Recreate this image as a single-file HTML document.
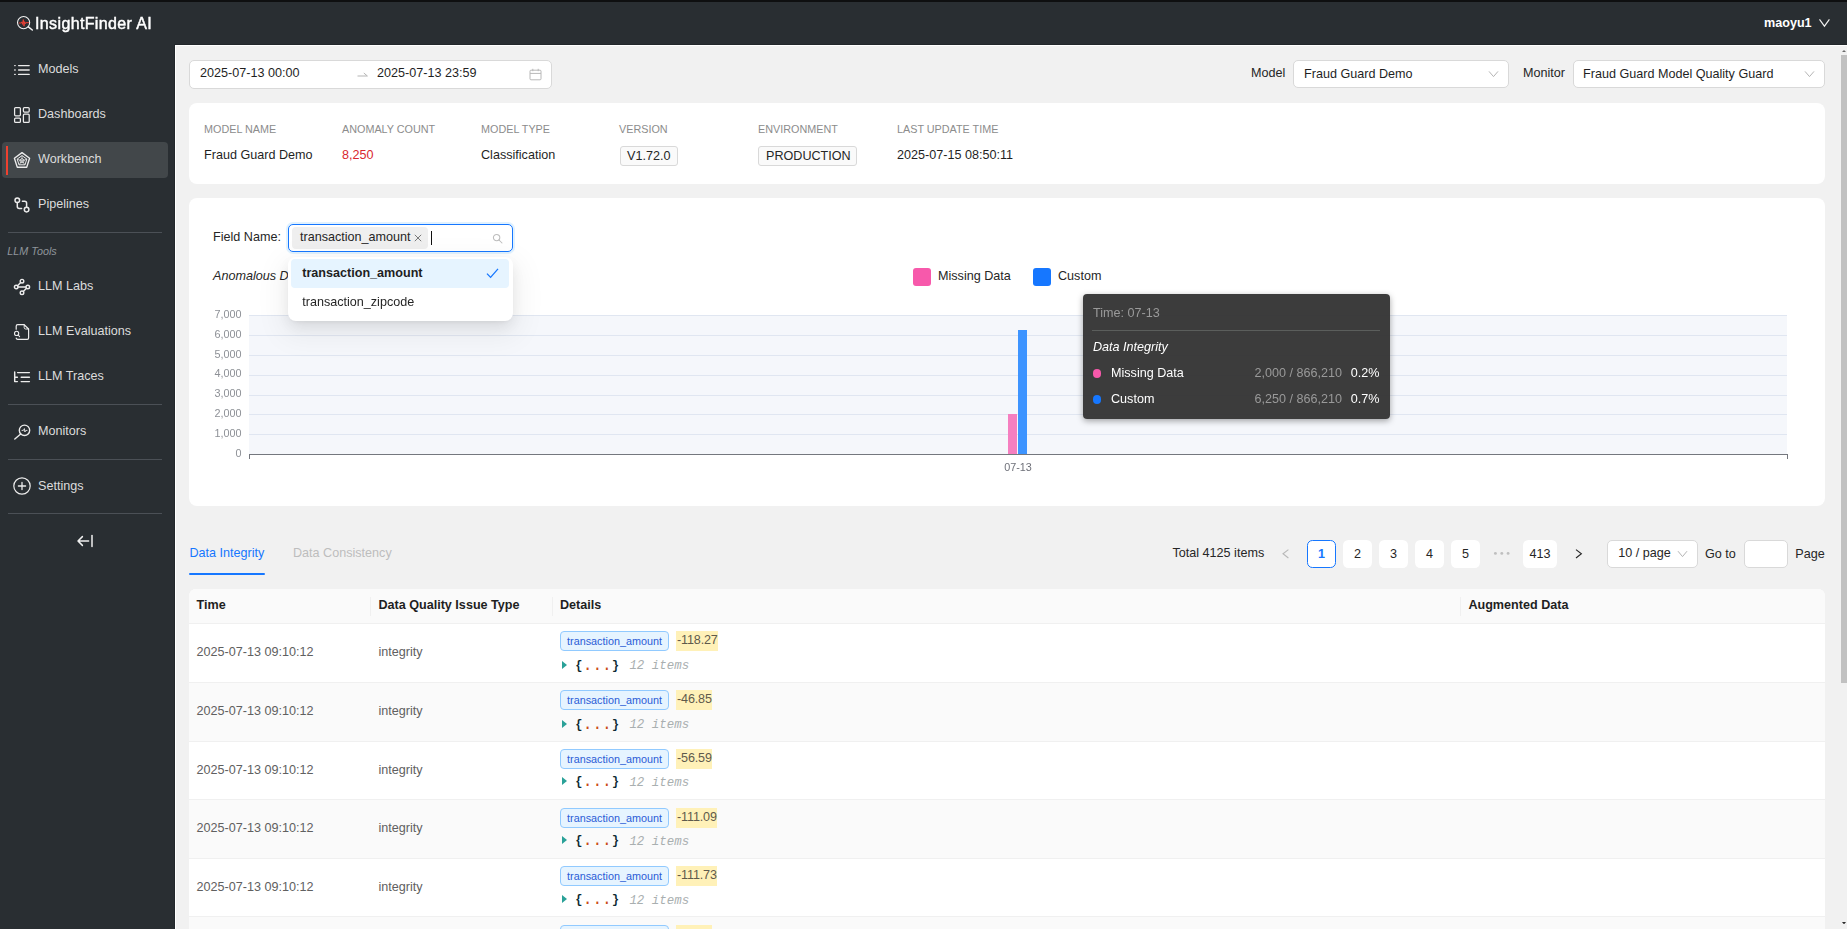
<!DOCTYPE html>
<html>
<head>
<meta charset="utf-8">
<title>InsightFinder AI</title>
<style>
*{box-sizing:border-box;margin:0;padding:0}
html,body{width:1847px;height:929px;overflow:hidden;background:#f1f1f1;font-family:"Liberation Sans",sans-serif;font-size:12.6px;color:#262626}
.abs{position:absolute}
#topline{position:absolute;left:0;top:0;width:1847px;height:1.5px;background:#0e0f10;z-index:50}
#header{position:absolute;left:0;top:0;width:1847px;height:45px;background:#292e32}
#sidebar{position:absolute;left:0;top:45px;width:175px;height:884px;background:#292e32}
#content{position:absolute;left:175px;top:45px;width:1666px;height:884px;background:#f1f1f1;overflow:hidden}
#edge-t{position:absolute;left:175px;top:45px;width:1672px;height:1px;background:#fff;z-index:5}
#edge-l{position:absolute;left:175px;top:45px;width:1px;height:884px;background:#fff;z-index:5}
#sh-t{position:absolute;left:175px;top:44px;width:1672px;height:1px;background:#22272b;z-index:5}
#sh-l{position:absolute;left:174px;top:44px;width:1px;height:885px;background:#22272b;z-index:5}
#scroll{position:absolute;left:1841px;top:46px;width:6px;height:883px;background:#f1f1f1}
#scroll .thumb{position:absolute;left:0;top:9px;width:6px;height:628px;background:#c1c1c1}
.nav{position:absolute;left:38px;color:#dcdcdc;font-size:12.6px;line-height:16px;white-space:nowrap}
.nav-ico{position:absolute;left:13px;width:18px;height:18px;overflow:visible}
.divider{position:absolute;left:8px;width:154px;height:1px;background:#4b5056}
.card{position:absolute;background:#fff;border-radius:8px}

.t{position:absolute;white-space:nowrap;line-height:16px;font-size:12.6px}
.lbl{position:absolute;white-space:nowrap;font-size:10.8px;line-height:14px;color:#8c8c8c;top:19px}
.val{position:absolute;white-space:nowrap;font-size:12.6px;line-height:16px;color:#1f1f1f;top:44px}
.box{position:absolute;background:#fff;border:1px solid #d9d9d9;border-radius:5px}
.pg{position:absolute;top:495px;width:28.8px;height:28px;background:#fff;border-radius:5.4px;text-align:center;line-height:28px;font-size:12.6px;color:#262626}

.th{position:absolute;top:8px;font-weight:700;font-size:12.6px;line-height:16px;color:#1f1f1f;white-space:nowrap}
.sep{position:absolute;top:8px;width:1px;height:19px;background:#f0f0f0}
.row{position:absolute;left:0;width:1636px;height:58.7px;border-bottom:1px solid #f0f0f0}
.row .c{position:absolute;top:20px;font-size:12.6px;line-height:16px;color:#606060;white-space:nowrap}
.tag{position:absolute;left:371px;top:7px;width:109px;height:20px;border:1px solid #91caff;background:#e6f4ff;border-radius:4px;font-size:10.8px;line-height:18px;color:#2b5cd6;text-align:center;white-space:nowrap}
.num{position:absolute;left:487px;top:7px;height:20px;background:#fff1b8;font-size:12.6px;line-height:18px;color:#5f5a4c;white-space:nowrap;padding:0 0 0 1px;letter-spacing:-0.15px}
.js{position:absolute;left:371px;top:32.6px;height:18px;font-family:"Liberation Mono",monospace;font-size:12.6px;line-height:18px;white-space:nowrap;color:#002b36}
.js .tri{position:absolute;left:2px;top:4px;width:0;height:0;border-left:5.4px solid #2aa198;border-top:4.7px solid transparent;border-bottom:4.7px solid transparent}
.js .b{position:absolute;top:0.2px;font-weight:700;font-size:11.9px;color:#0b2a33}
.js .e{position:absolute;top:0;font-size:16.2px;color:#cb4b16}
.js .n{position:absolute;top:0.8px;font-size:12.45px;font-style:italic;color:#a9afb0}
</style>
</head>
<body>
<div id="header">
<svg class="abs" style="left:16px;top:15px" width="18" height="18" viewBox="0 0 18 18" fill="none">
<circle cx="7.6" cy="7.6" r="6.1" stroke="#f2f2f2" stroke-width="1.1"/>
<path d="M12.4 11.9 L16.3 15.0" stroke="#f2f2f2" stroke-width="1.5" stroke-linecap="round"/>
<path d="M3.2 8 H5.4 L6 6.8 L6.6 9.4 L7.3 4.6 L8 11.2 L8.6 6.6 L9.2 8.8 L9.7 7.7 H12.6" stroke="#ef4136" stroke-width="0.95" stroke-linejoin="round" stroke-linecap="round"/>
</svg>
<div id="logotext" class="abs" style="left:34.6px;top:14px;font-size:16px;line-height:20px;font-weight:400;color:#fff;letter-spacing:0.37px;-webkit-text-stroke:0.45px #fff;white-space:nowrap;will-change:transform">InsightFinder AI</div>
<div id="user" class="abs" style="left:1764px;top:15px;font-size:12.6px;line-height:16px;font-weight:700;color:#fff">maoyu1</div>
<svg class="abs" style="left:1817px;top:18px" width="14" height="10" viewBox="0 0 14 10" fill="none"><path d="M2.5 1.3 L7.45 8.2 L12.4 1.3" stroke="#f0f0f0" stroke-width="1.15"/></svg>
</div>
<div id="topline"></div>
<div id="sidebar">
<!-- Models -->
<svg class="nav-ico" style="top:16px" viewBox="0 0 18 18" fill="none" stroke="#ececec" stroke-width="1.3" stroke-linecap="round">
<path d="M5.6 4.6H16.2M5.6 9H16.2M5.6 13.4H16.2"/><path d="M1.7 4.6H2.2M1.7 9H2.2M1.7 13.4H2.2"/></svg>
<div class="nav" style="top:16px">Models</div>
<!-- Dashboards -->
<svg class="nav-ico" style="top:61px" viewBox="0 0 18 18" fill="none" stroke="#ececec" stroke-width="1.25" stroke-linejoin="round">
<rect x="1.6" y="1.6" width="5.8" height="8.2" rx="1"/><rect x="10.4" y="1.6" width="5.8" height="4.4" rx="1"/><rect x="1.6" y="12" width="5.8" height="4.4" rx="1"/><rect x="10.4" y="8.2" width="5.8" height="8.2" rx="1"/></svg>
<div class="nav" style="top:61px">Dashboards</div>
<!-- Workbench -->
<div class="abs" style="left:2px;top:96.7px;width:166px;height:36px;background:#42474a;border-radius:4px"></div>
<div class="abs" style="left:6px;top:101px;width:2.2px;height:29px;background:#f0412f"></div>
<svg class="nav-ico" style="top:106px" viewBox="0 0 18 18" fill="none" stroke="#ececec" stroke-width="1" stroke-linejoin="round">
<path d="M9 1.6 L16.6 7.2 L13.7 16.2 H4.3 L1.4 7.2 Z" stroke-width="1.35"/>
<path d="M9 4.6 L13.8 8.1 L12 13.8 H6 L4.2 8.1 Z"/>
<path d="M9 7.4 L11.2 9 L10.4 11.6 H7.6 L6.8 9 Z" stroke-width="0.8"/>
<path d="M9 10 L9 4.6 M9 10 L13.8 8.1 M9 10 L12 13.8 M9 10 L6 13.8 M9 10 L4.2 8.1" stroke-width="0.7"/></svg>
<div class="nav" style="top:106px">Workbench</div>
<!-- Pipelines -->
<svg class="nav-ico" style="top:151px" viewBox="0 0 18 18" fill="none" stroke="#ececec" stroke-width="1.5" stroke-linecap="round">
<circle cx="4.3" cy="4.3" r="2.3"/><circle cx="13.6" cy="13.6" r="2.3"/>
<path d="M4.3 6.6 V10.6 Q4.3 12.6 6.3 12.6 H8.6"/><path d="M13.6 11.3 V7.3 Q13.6 5.3 11.6 5.3 H9.4"/></svg>
<div class="nav" style="top:151px">Pipelines</div>
<div class="divider" style="top:187px"></div>
<div class="abs" style="left:7.3px;top:199px;font-size:10.8px;line-height:14px;font-style:italic;color:#8f959b">LLM Tools</div>
<!-- LLM Labs -->
<svg class="nav-ico" style="top:233px" viewBox="0 0 18 18" fill="none" stroke="#ececec" stroke-width="1.4" stroke-linecap="round">
<circle cx="3.2" cy="9" r="1.8"/><circle cx="14.8" cy="9" r="1.8"/><circle cx="9" cy="3.2" r="1.8"/><circle cx="9" cy="14.8" r="1.8"/>
<path d="M5 9 H13 M4.5 7.7 L7.7 4.5 M13.5 10.3 L10.3 13.5"/></svg>
<div class="nav" style="top:233px">LLM Labs</div>
<!-- LLM Evaluations -->
<svg class="nav-ico" style="top:278px" viewBox="0 0 18 18" fill="none" stroke="#ececec" stroke-width="1.2" stroke-linecap="round" stroke-linejoin="round">
<path d="M3.2 6.2 V3.2 Q3.2 1.7 4.7 1.7 H11.2 L15.6 6 V15 Q15.6 16.4 14.2 16.4 H4.7 Q3.4 16.4 3.2 15.2"/>
<path d="M11.2 1.9 V4.6 Q11.2 6 12.6 6 H15.4" stroke-width="1"/>
<circle cx="3.6" cy="10.4" r="2.1" stroke-width="1.1"/><path d="M5.2 12 L6.6 13.6" stroke-width="1.1"/></svg>
<div class="nav" style="top:278px">LLM Evaluations</div>
<!-- LLM Traces -->
<svg class="nav-ico" style="top:323px" viewBox="0 0 18 18" fill="none" stroke="#ececec" stroke-width="1.45" stroke-linecap="round" stroke-linejoin="round">
<path d="M1.7 4 V13.6 H4.4 M1.7 9.2 H4.4"/><path d="M4.6 4.6 H16.4 M8.2 9.2 H16.4 M8.2 13.6 H16.4"/></svg>
<div class="nav" style="top:323px">LLM Traces</div>
<div class="divider" style="top:359px"></div>
<!-- Monitors -->
<svg class="nav-ico" style="top:377px" viewBox="0 0 18 18" fill="none" stroke="#ececec" stroke-width="1.4" stroke-linecap="round" stroke-linejoin="round">
<circle cx="11.5" cy="8.3" r="5.2"/><path d="M7.7 12 L1.8 17"/><path d="M9 8.4 H10.4 L11.4 6.6 L11.9 10 L12.8 8.4 H14" stroke-width="0.9"/></svg>
<div class="nav" style="top:378px">Monitors</div>
<div class="divider" style="top:414px"></div>
<!-- Settings -->
<svg class="nav-ico" style="top:432px" viewBox="0 0 18 18" fill="none" stroke="#ececec" stroke-width="1.2" stroke-linecap="round">
<circle cx="9" cy="9" r="8.2"/><path d="M5.4 9 H12.6 M9 5.4 V12.6" stroke-width="1.3"/></svg>
<div class="nav" style="top:433px">Settings</div>
<div class="divider" style="top:468px"></div>
<svg class="abs" style="left:76px;top:488px" width="18" height="16" viewBox="0 0 18 16" fill="none" stroke="#f0f0f0" stroke-width="1.5" stroke-linecap="round" stroke-linejoin="round">
<path d="M16 2.4 V13.6"/><path d="M12.6 8 H2.2 M6.4 3.6 L2 8 L6.4 12.4"/></svg>
</div>
<div id="content">
<!-- date range -->
<div class="box" style="left:14px;top:15px;width:363px;height:28.5px"></div>
<div class="t" style="left:25px;top:20px;color:#1f1f1f">2025-07-13 00:00</div>
<svg class="abs" style="left:181px;top:25px" width="14" height="8" viewBox="0 0 14 8" fill="none" stroke="#b5b5b5" stroke-width="1"><path d="M1.5 6 H11.4 L7.8 3"/></svg>
<div class="t" style="left:202px;top:20px;color:#1f1f1f">2025-07-13 23:59</div>
<svg class="abs" style="left:354px;top:23px" width="13" height="13" viewBox="0 0 13 13" fill="none" stroke="#b8b8b8" stroke-width="1"><rect x="1" y="2.2" width="11" height="9.6" rx="1"/><path d="M1 5.4 H12 M3.8 0.8 V3.2 M9.2 0.8 V3.2"/></svg>
<!-- model / monitor -->
<div class="t" style="left:1076px;top:20px;color:#262626">Model</div>
<div class="box" style="left:1118px;top:15px;width:216px;height:28px"></div>
<div class="t" style="left:1129px;top:21px;color:#1f1f1f">Fraud Guard Demo</div>
<svg class="abs" style="left:1313px;top:25px" width="11" height="8" viewBox="0 0 11 8" fill="none" stroke="#b5b5b5" stroke-width="1"><path d="M1 1.4 L5.5 6.6 L10 1.4"/></svg>
<div class="t" style="left:1348px;top:20px;color:#262626">Monitor</div>
<div class="box" style="left:1398px;top:15px;width:252px;height:28px"></div>
<div class="t" style="left:1408px;top:21px;color:#1f1f1f">Fraud Guard Model Quality Guard</div>
<svg class="abs" style="left:1629px;top:25px" width="11" height="8" viewBox="0 0 11 8" fill="none" stroke="#b5b5b5" stroke-width="1"><path d="M1 1.4 L5.5 6.6 L10 1.4"/></svg>
<!-- info card -->
<div class="card" style="left:14px;top:58px;width:1636px;height:81px">
<div class="lbl" style="left:15px">MODEL NAME</div><div class="val" style="left:15px">Fraud Guard Demo</div>
<div class="lbl" style="left:153px">ANOMALY COUNT</div><div class="val" style="left:153px;color:#d9272e">8,250</div>
<div class="lbl" style="left:292px">MODEL TYPE</div><div class="val" style="left:292px">Classification</div>
<div class="lbl" style="left:430px">VERSION</div>
<div class="abs" style="left:431px;top:43px;width:58px;height:20px;border:1px solid #d9d9d9;border-radius:3px;background:#fafafa"></div>
<div class="val" style="left:438px;top:45px;color:#262626">V1.72.0</div>
<div class="lbl" style="left:569px">ENVIRONMENT</div>
<div class="abs" style="left:569px;top:43px;width:99px;height:20px;border:1px solid #d9d9d9;border-radius:3px;background:#fafafa"></div>
<div class="val" style="left:577px;top:45px;color:#262626">PRODUCTION</div>
<div class="lbl" style="left:708px">LAST UPDATE TIME</div><div class="val" style="left:708px">2025-07-15 08:50:11</div>
</div>
<div class="card" style="left:14px;top:153px;width:1636px;height:308px">
<div class="t" style="left:24px;top:31px;color:#262626">Field Name:</div>
<!-- plot -->
<div class="abs" style="left:60px;top:117px;width:1538px;height:139px;background:#f5f7fb"></div>
<div class="abs" style="left:60px;top:116.9px;width:1538px;height:1px;background:#e0e6f1"></div><div class="abs" style="left:60px;top:136.9px;width:1538px;height:1px;background:#e0e6f1"></div><div class="abs" style="left:60px;top:156.9px;width:1538px;height:1px;background:#e0e6f1"></div><div class="abs" style="left:60px;top:176.7px;width:1538px;height:1px;background:#e0e6f1"></div><div class="abs" style="left:60px;top:197px;width:1538px;height:1px;background:#e0e6f1"></div><div class="abs" style="left:60px;top:216.3px;width:1538px;height:1px;background:#e0e6f1"></div><div class="abs" style="left:60px;top:236.1px;width:1538px;height:1px;background:#e0e6f1"></div>
<div class="abs" style="left:0px;width:52.5px;top:109.2px;text-align:right;font-size:10.8px;line-height:14px;color:#8d9096;will-change:transform">7,000</div><div class="abs" style="left:0px;width:52.5px;top:129.0px;text-align:right;font-size:10.8px;line-height:14px;color:#8d9096;will-change:transform">6,000</div><div class="abs" style="left:0px;width:52.5px;top:148.9px;text-align:right;font-size:10.8px;line-height:14px;color:#8d9096;will-change:transform">5,000</div><div class="abs" style="left:0px;width:52.5px;top:168.0px;text-align:right;font-size:10.8px;line-height:14px;color:#8d9096;will-change:transform">4,000</div><div class="abs" style="left:0px;width:52.5px;top:187.8px;text-align:right;font-size:10.8px;line-height:14px;color:#8d9096;will-change:transform">3,000</div><div class="abs" style="left:0px;width:52.5px;top:208.4px;text-align:right;font-size:10.8px;line-height:14px;color:#8d9096;will-change:transform">2,000</div><div class="abs" style="left:0px;width:52.5px;top:228.2px;text-align:right;font-size:10.8px;line-height:14px;color:#8d9096;will-change:transform">1,000</div><div class="abs" style="left:0px;width:52.5px;top:248.1px;text-align:right;font-size:10.8px;line-height:14px;color:#8d9096;will-change:transform">0</div>
<div class="abs" style="left:819px;top:216.4px;width:9px;height:39.6px;background:#f57fc0"></div>
<div class="abs" style="left:829.3px;top:132px;width:9.2px;height:124px;background:#3d94ff"></div>
<div class="abs" style="left:60px;top:255.6px;width:1538.5px;height:1.2px;background:#74777e"></div>
<div class="abs" style="left:60px;top:256px;width:1px;height:5px;background:#74777e"></div>
<div class="abs" style="left:1597.5px;top:256px;width:1px;height:5px;background:#74777e"></div>
<div class="abs" style="left:809px;width:40px;top:262.3px;text-align:center;font-size:10.8px;line-height:14px;color:#6e7079;will-change:transform">07-13</div>
<!-- title + legend -->
<div class="t" style="left:24px;top:70px;font-style:italic;color:#262626">Anomalous Data</div>
<div class="abs" style="left:724px;top:70px;width:18px;height:18px;border-radius:3px;background:#f759ab"></div>
<div class="t" style="left:749px;top:70px;color:#262626">Missing Data</div>
<div class="abs" style="left:844px;top:70px;width:18px;height:18px;border-radius:3px;background:#1677ff"></div>
<div class="t" style="left:869px;top:70px;color:#262626">Custom</div>
<!-- tooltip -->
<div class="abs" style="left:894px;top:95.5px;width:306.5px;height:125px;background:rgba(50,50,50,0.95);border-radius:4px;box-shadow:0 2px 6px rgba(0,0,0,0.35);color:#fff;will-change:transform">
 <div class="t" style="left:10px;top:10.5px;color:#9a9a9a">Time: 07-13</div>
 <div class="abs" style="left:9px;top:36px;width:288px;height:1px;background:#5b5e5c"></div>
 <div class="t" style="left:10px;top:44.5px;font-style:italic;color:#fff">Data Integrity</div>
 <div class="abs" style="left:9.7px;top:75.4px;width:8.6px;height:8.6px;border-radius:50%;background:#f759ab"></div>
 <div class="t" style="left:28px;top:70.7px;color:#fff">Missing Data</div>
 <div class="t" style="right:47.5px;top:70.7px;color:#9a9a9a">2,000 / 866,210</div>
 <div class="t" style="right:10px;top:70.7px;color:#fff">0.2%</div>
 <div class="abs" style="left:9.7px;top:101.4px;width:8.6px;height:8.6px;border-radius:50%;background:#1677ff"></div>
 <div class="t" style="left:28px;top:96.7px;color:#fff">Custom</div>
 <div class="t" style="right:47.5px;top:96.7px;color:#9a9a9a">6,250 / 866,210</div>
 <div class="t" style="right:10px;top:96.7px;color:#fff">0.7%</div>
</div>
<!-- select -->
<div class="abs" style="left:99.4px;top:26px;width:224.5px;height:28px;background:#fff;border:1px solid #1677ff;border-radius:5px;box-shadow:0 0 0 2px rgba(5,145,255,0.12)"></div>
<div class="abs" style="left:103px;top:29px;width:136px;height:21.6px;background:#efefef;border-radius:4px"></div>
<div class="t" style="left:111px;top:31px;color:#262626">transaction_amount</div>
<svg class="abs" style="left:224.9px;top:36.1px" width="8" height="8" viewBox="0 0 8 8" fill="none" stroke="#7a7a7a" stroke-width="1"><path d="M0.8 0.8 L7.2 7.2 M7.2 0.8 L0.8 7.2"/></svg>
<div class="abs" style="left:242px;top:33px;width:1px;height:13.5px;background:#111"></div>
<svg class="abs" style="left:302.6px;top:34.6px" width="11" height="11" viewBox="0 0 11 11" fill="none" stroke="#bdbdbd" stroke-width="1.05"><circle cx="4.6" cy="4.6" r="3.2"/><path d="M7 7 L10 10" stroke-linecap="round"/></svg>
<!-- dropdown -->
<div class="abs" style="left:99.4px;top:58.5px;width:224.5px;height:64.3px;background:#fff;border-radius:8px;box-shadow:0 6px 16px 0 rgba(0,0,0,0.08),0 3px 6px -4px rgba(0,0,0,0.12),0 9px 28px 8px rgba(0,0,0,0.05)">
 <div class="abs" style="left:2.8px;top:2.6px;width:218px;height:28.6px;background:#e6f4ff;border-radius:4px"></div>
 <div class="t" style="left:13.8px;top:8.5px;font-weight:700;color:#1f1f1f">transaction_amount</div>
 <svg class="abs" style="left:197.5px;top:11px" width="13" height="11" viewBox="0 0 13 11" fill="none" stroke="#1677ff" stroke-width="1.3"><path d="M1 5.6 L4.6 9.4 L12 0.8"/></svg>
 <div class="t" style="left:13.8px;top:37.5px;color:#262626">transaction_zipcode</div>
</div>
</div>

<!-- tabs -->
<div class="t" style="left:14.5px;top:500px;color:#1677ff">Data Integrity</div>
<div class="abs" style="left:14.4px;top:528px;width:75.3px;height:2px;background:#1677ff;border-radius:1px"></div>
<div class="t" style="left:118px;top:500px;color:#bdbdbd">Data Consistency</div>
<!-- pagination -->
<div class="t" style="left:997.5px;top:500px;color:#262626">Total 4125 items</div>
<svg class="abs" style="left:1106px;top:503px" width="9" height="12" viewBox="0 0 9 12" fill="none" stroke="#b8b8b8" stroke-width="1.1"><path d="M7.4 1.6 L2 5.8 L7.4 10"/></svg>
<div class="pg" style="left:1132px;border:1px solid #1677ff;color:#1677ff;font-weight:700;line-height:26px">1</div>
<div class="pg" style="left:1168px">2</div><div class="pg" style="left:1204px">3</div><div class="pg" style="left:1240px">4</div><div class="pg" style="left:1276px">5</div>
<svg class="abs" style="left:1318px;top:506px" width="18" height="5" viewBox="0 0 18 5" fill="#bfbfbf"><circle cx="2.4" cy="2.4" r="1.45"/><circle cx="8.8" cy="2.4" r="1.45"/><circle cx="15.1" cy="2.4" r="1.45"/></svg>
<div class="pg" style="left:1348px;width:34px">413</div>
<svg class="abs" style="left:1399px;top:503px" width="9" height="12" viewBox="0 0 9 12" fill="none" stroke="#262626" stroke-width="1.1"><path d="M2 1.6 L7.4 5.8 L2 10"/></svg>
<div class="box" style="left:1432.3px;top:495.4px;width:90.4px;height:27.4px"></div>
<div class="t" style="left:1443.3px;top:500px;color:#262626">10 / page</div>
<svg class="abs" style="left:1502px;top:505px" width="11" height="8" viewBox="0 0 11 8" fill="none" stroke="#b5b5b5" stroke-width="1"><path d="M1 1.2 L5.5 6.6 L10 1.2"/></svg>
<div class="t" style="left:1530px;top:501px;color:#262626">Go to</div>
<div class="box" style="left:1568.5px;top:495.4px;width:44px;height:27.4px"></div>
<div class="t" style="left:1620.3px;top:501px;color:#262626">Page</div>
<!-- table -->
<div class="abs" style="left:14px;top:543.6px;width:1636px;height:400px;background:#fff;border-radius:7px 7px 0 0;overflow:hidden">
<div class="abs" style="left:0;top:0;width:1636px;height:35.4px;background:#fafafa;border-bottom:1px solid #f0f0f0"></div>
<div class="th" style="left:7.6px">Time</div><div class="sep" style="left:181px"></div>
<div class="th" style="left:189.4px">Data Quality Issue Type</div><div class="sep" style="left:363px"></div>
<div class="th" style="left:371px">Details</div><div class="sep" style="left:1271px"></div>
<div class="th" style="left:1279.4px">Augmented Data</div>
<!--ROWS-->
<div class="row" style="top:35.4px;height:59px;background:#fff">
<div class="c" style="left:7.6px">2025-07-13 09:10:12</div><div class="c" style="left:189.4px">integrity</div>
<div class="tag" style="top:7px">transaction_amount</div><div class="num" style="top:7px">-118.27</div>
<div class="js" style="top:32.6px"><div class="tri"></div><span class="b" style="left:15.3px">{</span><span class="e" style="left:22.7px">...</span><span class="b" style="left:52.1px">}</span><span class="n" style="left:69.4px">12 items</span></div>
</div>
<div class="row" style="top:94.4px;height:59px;background:#fafafa">
<div class="c" style="left:7.6px">2025-07-13 09:10:12</div><div class="c" style="left:189.4px">integrity</div>
<div class="tag" style="top:7px">transaction_amount</div><div class="num" style="top:7px">-46.85</div>
<div class="js" style="top:32.6px"><div class="tri"></div><span class="b" style="left:15.3px">{</span><span class="e" style="left:22.7px">...</span><span class="b" style="left:52.1px">}</span><span class="n" style="left:69.4px">12 items</span></div>
</div>
<div class="row" style="top:153.4px;height:58px;background:#fff">
<div class="c" style="left:7.6px">2025-07-13 09:10:12</div><div class="c" style="left:189.4px">integrity</div>
<div class="tag" style="top:7px">transaction_amount</div><div class="num" style="top:7px">-56.59</div>
<div class="js" style="top:31.1px"><div class="tri"></div><span class="b" style="left:15.3px">{</span><span class="e" style="left:22.7px">...</span><span class="b" style="left:52.1px">}</span><span class="n" style="left:69.4px">12 items</span></div>
</div>
<div class="row" style="top:211.4px;height:59px;background:#fafafa">
<div class="c" style="left:7.6px">2025-07-13 09:10:12</div><div class="c" style="left:189.4px">integrity</div>
<div class="tag" style="top:8px">transaction_amount</div><div class="num" style="top:8px">-111.09</div>
<div class="js" style="top:32.0px"><div class="tri"></div><span class="b" style="left:15.3px">{</span><span class="e" style="left:22.7px">...</span><span class="b" style="left:52.1px">}</span><span class="n" style="left:69.4px">12 items</span></div>
</div>
<div class="row" style="top:270.4px;height:58px;background:#fff">
<div class="c" style="left:7.6px">2025-07-13 09:10:12</div><div class="c" style="left:189.4px">integrity</div>
<div class="tag" style="top:7px">transaction_amount</div><div class="num" style="top:7px">-111.73</div>
<div class="js" style="top:31.8px"><div class="tri"></div><span class="b" style="left:15.3px">{</span><span class="e" style="left:22.7px">...</span><span class="b" style="left:52.1px">}</span><span class="n" style="left:69.4px">12 items</span></div>
</div>
<div class="row" style="top:328.4px;height:59px;background:#fafafa">
<div class="c" style="left:7.6px">2025-07-13 09:10:12</div><div class="c" style="left:189.4px">integrity</div>
<div class="tag" style="top:8px">transaction_amount</div><div class="num" style="top:8px">-46.85</div>
<div class="js" style="top:32.6px"><div class="tri"></div><span class="b" style="left:15.3px">{</span><span class="e" style="left:22.7px">...</span><span class="b" style="left:52.1px">}</span><span class="n" style="left:69.4px">12 items</span></div>
</div>
<!--/ROWS-->

</div>

</div>
<div id="scroll"><div class="thumb"></div><svg class="abs" style="left:1px;top:4px" width="4" height="2" viewBox="0 0 4 2"><path d="M0 2 L2 0 L4 2 Z" fill="#6a6a6a"/></svg><svg class="abs" style="left:1px;top:876px" width="4" height="2.4" viewBox="0 0 4 2.4"><path d="M0 0 L4 0 L2 2.4 Z" fill="#2d2d2d"/></svg></div>
<div id="edge-t"></div><div id="edge-l"></div><div id="sh-t"></div><div id="sh-l"></div>
</body>
</html>
